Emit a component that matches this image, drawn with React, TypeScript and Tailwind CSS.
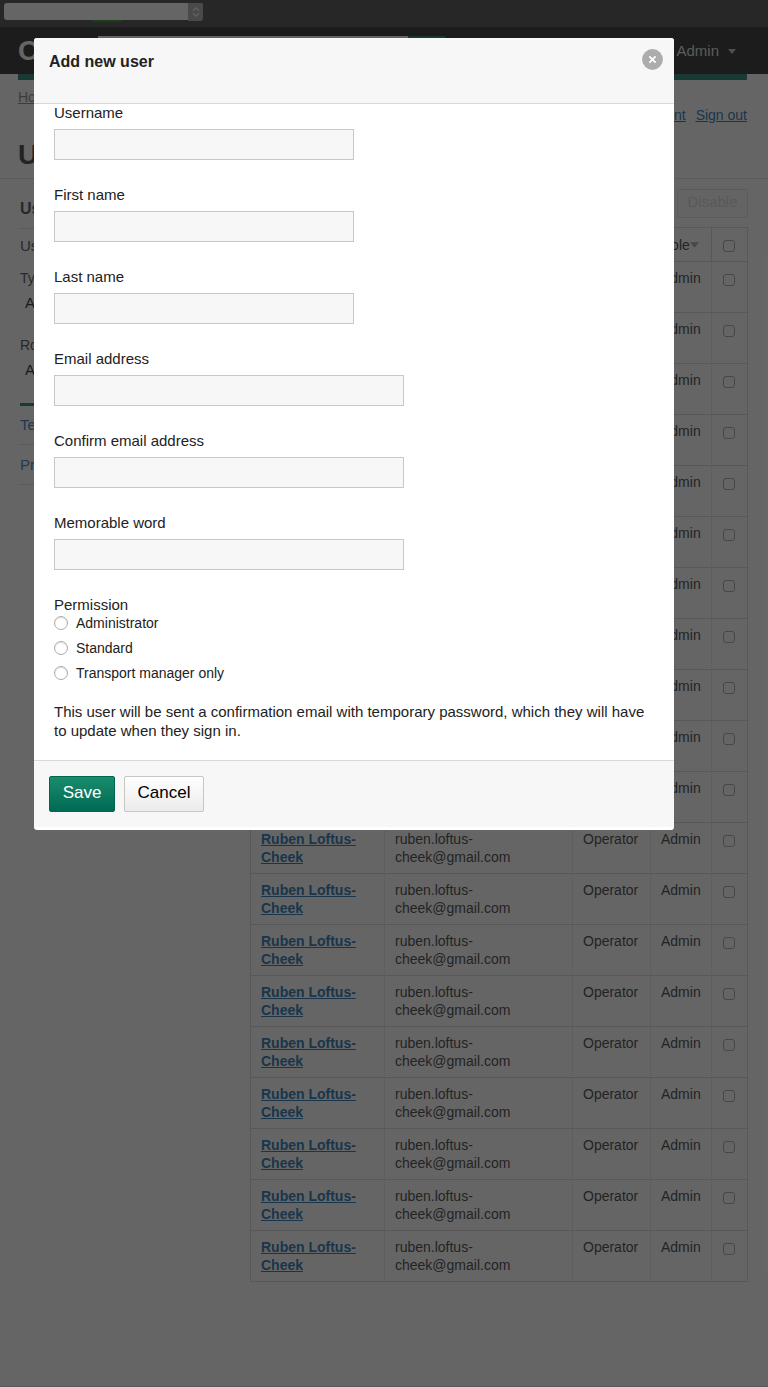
import { useState } from "react";

type Field = { id: string; label: string; wide?: boolean };

const fields: Field[] = [
  { id: "username", label: "Username" },
  { id: "first-name", label: "First name" },
  { id: "last-name", label: "Last name" },
  { id: "email", label: "Email address", wide: true },
  { id: "confirm-email", label: "Confirm email address", wide: true },
  { id: "memorable-word", label: "Memorable word", wide: true },
];

const permissions = ["Administrator", "Standard", "Transport manager only"];

const users = Array.from({ length: 20 }, (_, i) => ({
  id: i + 1,
  name: "Ruben Loftus-Cheek",
  email: "ruben.loftus-cheek@gmail.com",
  type: "Operator",
  role: "Admin",
}));

function Caret({ className }: { className: string }) {
  return (
    <svg viewBox="0 0 10 6" className={className} aria-hidden="true">
      <path d="M0 0h10L5 6z" fill="currentColor" />
    </svg>
  );
}

function TopBar() {
  return (
    <div className="h-[27px] bg-[#303030] px-1 pt-[3px]">
      <div className="relative h-[18px] w-[199px]">
        <span className="absolute left-[87px] top-[10px] h-[9px] w-8 rounded-sm bg-[#008000]" />
        <select
          aria-label="Prototype page"
          className="relative block h-[17px] w-full appearance-none rounded-[3px] bg-white"
        />
        <span className="pointer-events-none absolute right-0 top-0 flex h-[18px] w-[15px] items-center justify-center rounded-r-[3px] bg-[#a6a6a6] text-white">
          <svg viewBox="0 0 8 10" className="h-[10px] w-2" fill="none" stroke="currentColor" strokeWidth="1.2" aria-hidden="true">
            <path d="M1 3.6 4 .9l3 2.7M1 6.4l3 2.7 3-2.7" />
          </svg>
        </span>
      </div>
    </div>
  );
}

function Header() {
  return (
    <header>
      <div className="flex h-[47px] items-start bg-[#0b0c0c] pl-[18px] pr-8">
        <a href="#home" className="w-20 pt-[7px] text-[28px] font-bold leading-[34px] text-white">
          OLCS
        </a>
        <form className="mt-[9px] flex h-[30px] w-[348px]">
          <input aria-label="Search" className="min-w-0 flex-1 bg-white" />
          <button type="button" aria-label="Search" className="w-[38px] rounded-r-[3px] bg-[#006f56]" />
        </form>
        <button type="button" className="ml-auto flex items-center gap-[9px] pt-[15px] text-[15px] leading-[18px] text-[#dcdcdc]">
          Admin
          <Caret className="h-[5px] w-2 text-[#b4b4b4]" />
        </button>
      </div>
      <div className="ml-[18px] mr-[21px] h-[6px] bg-[#006f56]" />
    </header>
  );
}

function Sidebar() {
  return (
    <aside className="w-[210px] shrink-0 pt-5 text-[#333]">
      <h2 className="border-b border-[#dadada] pb-[9px] text-[16px] font-bold leading-5">Users</h2>
      <p className="pt-[7px] text-[15px] leading-5">User filters</p>
      <label htmlFor="type" className="mt-3 block text-sm leading-5">Type</label>
      <select id="type" className="block h-[30px] w-[150px] appearance-none pl-[5px] text-[15px] text-black">
        <option>All</option>
      </select>
      <label htmlFor="role" className="mt-[17px] block text-sm leading-5">Role</label>
      <select id="role" className="block h-[30px] w-[150px] appearance-none pl-[5px] text-[15px] text-black">
        <option>All</option>
      </select>
      <nav className="mt-[18px] border-t-[3px] border-[#006f56] text-[15px] text-[#0f70b8]">
        <a href="#teams" className="block border-b border-[#dadada] pb-[9px] pt-[9px] leading-5">Teams</a>
        <a href="#printers" className="block border-b border-[#dadada] pb-[9px] pt-[10px] leading-5">Printers</a>
      </nav>
    </aside>
  );
}

const box = "block size-3 appearance-none rounded-[3px] border border-[#999] bg-white";

function UserTable() {
  return (
    <table className="w-full table-fixed border-separate border-spacing-0 border-l border-t border-[#d4d4d4] text-left text-sm leading-[18px] text-[#222]">
      <colgroup>
        <col className="w-[134px]" />
        <col />
        <col className="w-[78px]" />
        <col className="w-[61px]" />
        <col className="w-[36px]" />
      </colgroup>
      <thead>
        <tr className="h-[34px]">
          {["Name", "Email address", "Type", "Role"].map((h) => (
            <th key={h} className="border-b border-r border-[#d4d4d4] pl-[10px] font-normal">
              <span className="flex items-center">
                {h}
                <Caret className="h-[6px] w-[9px] text-[#999]" />
              </span>
            </th>
          ))}
          <th className="border-b border-r border-[#d4d4d4] pl-[11px] pt-[2px]">
            <input type="checkbox" aria-label="Select all users" className={box} />
          </th>
        </tr>
      </thead>
      <tbody>
        {users.map((u) => (
          <tr key={u.id} className="align-top">
            <td className="border-b border-r border-[#d4d4d4] px-[10px] py-[7px] [border-right-style:dotted]">
              <a href="#user" className="font-bold text-[#0060a8] underline">{u.name}</a>
            </td>
            <td className="border-b border-r border-[#d4d4d4] px-[10px] py-[7px] [border-right-style:dotted]">
              <span className="block max-w-[140px]">{u.email}</span>
            </td>
            <td className="border-b border-r border-[#d4d4d4] py-[7px] pl-[10px] [border-right-style:dotted]">{u.type}</td>
            <td className="border-b border-r border-[#d4d4d4] py-[7px] pl-[10px] [border-right-style:dotted]">{u.role}</td>
            <td className="border-b border-r border-[#d4d4d4] pl-[11px] pt-3">
              <input type="checkbox" aria-label={`Select user ${u.id}`} className={box} />
            </td>
          </tr>
        ))}
      </tbody>
    </table>
  );
}

function Modal() {
  const [permission, setPermission] = useState("");
  return (
    <div role="dialog" aria-modal="true" aria-labelledby="dialog-title" className="w-full max-w-[640px] rounded-[3px] bg-white pb-[3px] text-[#222]">
      <div className="flex h-[66px] items-start justify-between rounded-t-[3px] border-b border-[#d8d8d8] bg-[#f7f7f7] pl-[15px] pr-[11px] pt-[11px]">
        <h2 id="dialog-title" className="pt-[3px] text-[16px] font-bold leading-5">Add new user</h2>
        <button type="button" aria-label="Close">
          <svg viewBox="0 0 21 21" className="size-[21px]" aria-hidden="true">
            <circle cx="10.5" cy="10.5" r="10.4" fill="#acacac" />
            <path d="m7.4 7.4 6.2 6.2m0-6.2-6.2 6.2" stroke="#fff" strokeWidth="1.8" />
          </svg>
        </button>
      </div>
      <form>
        <div className="px-5 pb-5 text-[15px]">
          {fields.map((f) => (
            <div key={f.id} className="pb-[26px]">
              <label htmlFor={f.id} className="block pb-[7px] leading-[18px]">{f.label}</label>
              <input
                id={f.id}
                className={`block h-[31px] w-full border border-[#c8c8c8] bg-[#f7f7f7] px-2 ${f.wide ? "max-w-[350px]" : "max-w-[300px]"}`}
              />
            </div>
          ))}
          <fieldset className="pb-5">
            <legend className="leading-[18px]">Permission</legend>
            <div className="flex flex-col gap-[7px] text-sm leading-[18px]">
              {permissions.map((p) => (
                <label key={p} className="flex items-center gap-2">
                  <input
                    type="radio"
                    name="permission"
                    checked={permission === p}
                    onChange={() => setPermission(p)}
                    className="size-[14px] appearance-none rounded-full border border-[#ababab] bg-white shadow-[inset_0_1px_1px_#ddd] checked:border-4 checked:border-[#006f56]"
                  />
                  {p}
                </label>
              ))}
            </div>
          </fieldset>
          <p className="leading-[19px]">
            This user will be sent a confirmation email with temporary password, which they will have to update when they sign in.
          </p>
        </div>
        <div className="flex gap-[9px] border-t border-[#d8d8d8] bg-[#f7f7f7] p-[15px] text-[17px]">
          <button type="button" className="h-9 w-[66px] rounded-[2px] border border-[#00664f] bg-linear-to-b from-[#198c6d] to-[#006a53] pb-[3px] text-white">
            Save
          </button>
          <button type="button" className="h-9 w-20 rounded-[2px] border border-[#c6c6c6] bg-linear-to-b from-white to-[#ebebeb] pb-[3px] text-black">
            Cancel
          </button>
        </div>
      </form>
    </div>
  );
}

export default function App() {
  return (
    <div className="relative min-h-screen bg-white font-['Liberation_Sans',Arial,sans-serif]">
      <TopBar />
      <Header />
      <div className="flex h-[98px] items-start justify-between pl-[18px] pr-[21px] text-sm">
        <div>
          <a href="#home" className="block pt-2 leading-[18px] text-[#777] underline">Home</a>
          <h1 className="pt-8 text-[28px] font-bold leading-[34px] text-[#222]">Users</h1>
        </div>
        <div className="flex gap-[10px] pt-[26px] leading-[18px] text-[#0060a8] underline">
          <a href="#account">My account</a>
          <a href="#signout">Sign out</a>
        </div>
      </div>
      <main className="flex gap-5 border-t border-[#dcdcdc] px-5 pb-[104px]">
        <Sidebar />
        <div className="min-w-0 flex-1">
          <div className="flex justify-end pb-[9px] pt-[10px]">
            <button type="button" disabled className="h-[29px] w-[71px] rounded-[2px] border border-[#dedede] bg-[#fafafa] pb-[3px] text-[15px] leading-5 text-[#d6d6d6]">
              Disable
            </button>
          </div>
          <UserTable />
        </div>
      </main>
      <footer className="border-t border-[#d4d4d4]" />
      <div className="absolute inset-0 bg-[#242424]/70 px-[34px] pt-[38px]">
        <Modal />
      </div>
    </div>
  );
}
